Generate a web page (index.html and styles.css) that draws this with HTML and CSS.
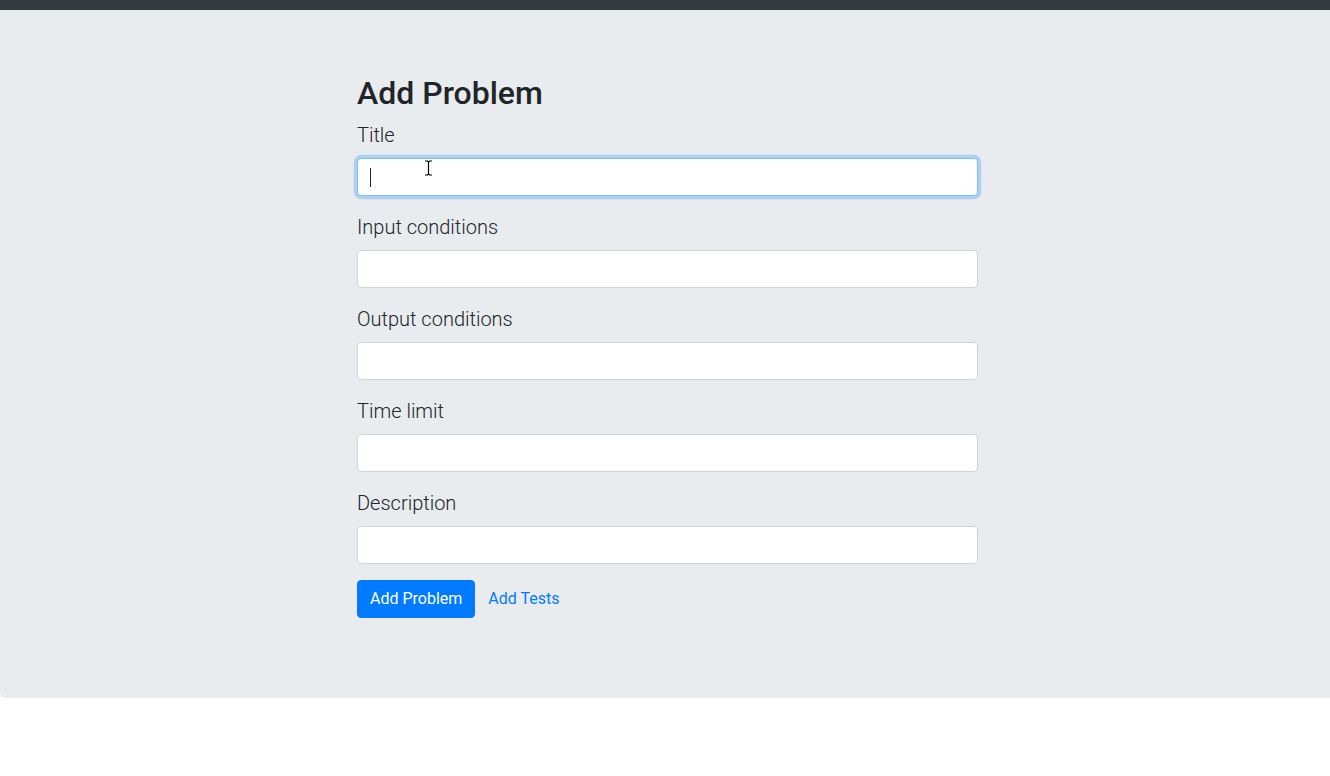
FILE: index.html
```html
<!DOCTYPE html>
<html lang="en">
<head>
<meta charset="utf-8">
<title>Add Problem</title>
<link rel="stylesheet" href="styles.css">
</head>
<body>
<div class="topbar"></div>
<div class="jumbotron">
  <div class="content">
    <h2 class="title">Add Problem</h2>
    <form class="form">
      <div class="group">
        <label class="label" for="t">Title</label>
        <div class="field">
          <input id="t" class="input focused" type="text">
          <span class="caret"></span>
          <svg class="ibeam" width="9" height="16" viewBox="0 0 9 16"><path d="M1 1h2.5l1 1 1-1H8M4.5 2v12M1 15h2.5l1-1 1 1H8" fill="none" stroke="#000" stroke-width="1.2"/></svg>
        </div>
      </div>
      <div class="group">
        <label class="label" for="i">Input conditions</label>
        <input id="i" class="input" type="text">
      </div>
      <div class="group">
        <label class="label" for="o">Output conditions</label>
        <input id="o" class="input" type="text">
      </div>
      <div class="group">
        <label class="label" for="l">Time limit</label>
        <input id="l" class="input" type="text">
      </div>
      <div class="group">
        <label class="label" for="d">Description</label>
        <input id="d" class="input" type="text">
      </div>
      <div class="actions">
        <button type="button" class="btn">Add Problem</button>
        <a class="link" href="#">Add Tests</a>
      </div>
    </form>
  </div>
</div>
</body>
</html>
```
FILE: styles.css
```css
* { box-sizing: border-box; }
html, body { margin: 0; padding: 0; }
body {
  font-family: Roboto, "Liberation Sans", sans-serif;
  color: #212529;
  background: #fff;
  font-size: 16px;
  line-height: 1.5;
}
.topbar {
  height: 10px;
  background: #343a40;
}
.jumbotron {
  background: #e9ecef;
  padding: 64px 0 80px 5px;
  border-bottom-left-radius: 5px;
  margin-bottom: 32px;
}
.content {
  width: 621px;
  margin: 0 auto;
}
.title {
  margin: 0 0 8px;
  font-size: 32px;
  font-weight: 500;
  line-height: 1.2;
}
.form { margin: 0; }
.group {
  display: flex;
  flex-direction: column;
  margin-bottom: 16px;
}
.label {
  font-size: 20px;
  font-weight: 300;
  line-height: 30px;
  margin-bottom: 8px;
}
.field { position: relative; }
.input {
  display: block;
  width: 100%;
  height: 38px;
  padding: 6px 12px;
  font-family: inherit;
  font-size: 16px;
  color: #495057;
  background: #fff;
  border: 1px solid #ced4da;
  border-radius: 4px;
  outline: none;
}
.input.focused {
  border-color: #80bdff;
  box-shadow: 0 0 0 3.2px rgba(0, 123, 255, 0.25);
}
.caret {
  position: absolute;
  left: 13px;
  top: 10px;
  width: 1px;
  height: 19px;
  background: #222;
}
.ibeam {
  position: absolute;
  left: 67px;
  top: 2px;
}
.actions {
  display: flex;
  align-items: center;
  gap: 1px;
}
.btn {
  font-family: inherit;
  font-size: 16px;
  line-height: 24px;
  padding: 6px 12px;
  color: #fff;
  background: #007bff;
  border: 1px solid #007bff;
  border-radius: 4px;
  cursor: pointer;
}
.link {
  font-size: 16px;
  line-height: 24px;
  padding: 7px 12px;
  color: #007bff;
  text-decoration: none;
}
```
